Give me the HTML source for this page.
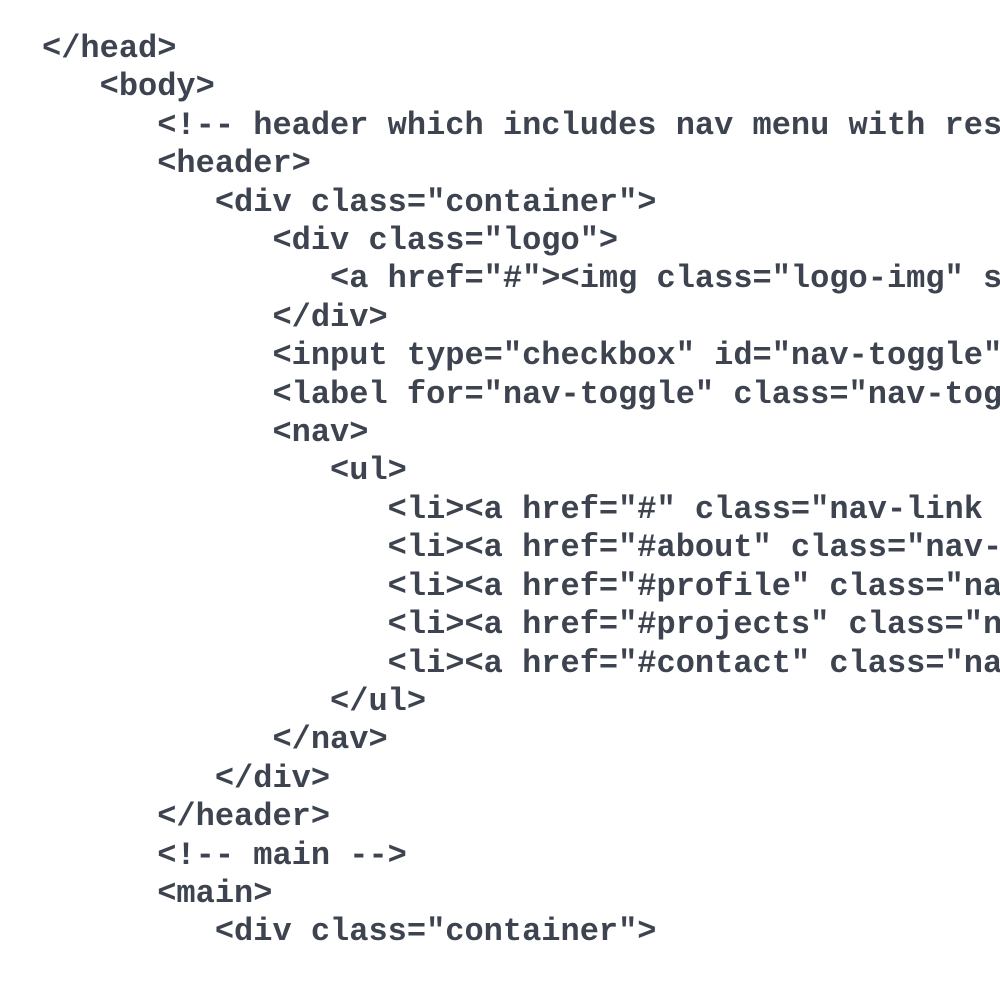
<!DOCTYPE html>
<html><head><style>
html,body{margin:0;padding:0;background:#fff;width:1000px;height:1000px;overflow:hidden}
pre{margin:0;position:absolute;left:42px;top:30px;font-family:"Liberation Mono",monospace;font-weight:bold;font-size:32px;line-height:38.4px;color:#3d4450;white-space:pre}
</style></head><body><pre>&lt;/head&gt;
   &lt;body&gt;
      &lt;!-- header which includes nav menu with res
      &lt;header&gt;
         &lt;div class="container"&gt;
            &lt;div class="logo"&gt;
               &lt;a href="#"&gt;&lt;img class="logo-img" s
            &lt;/div&gt;
            &lt;input type="checkbox" id="nav-toggle"
            &lt;label for="nav-toggle" class="nav-tog
            &lt;nav&gt;
               &lt;ul&gt;
                  &lt;li&gt;&lt;a href="#" class="nav-link
                  &lt;li&gt;&lt;a href="#about" class="nav-
                  &lt;li&gt;&lt;a href="#profile" class="na
                  &lt;li&gt;&lt;a href="#projects" class="n
                  &lt;li&gt;&lt;a href="#contact" class="na
               &lt;/ul&gt;
            &lt;/nav&gt;
         &lt;/div&gt;
      &lt;/header&gt;
      &lt;!-- main --&gt;
      &lt;main&gt;
         &lt;div class="container"&gt;</pre></body></html>
